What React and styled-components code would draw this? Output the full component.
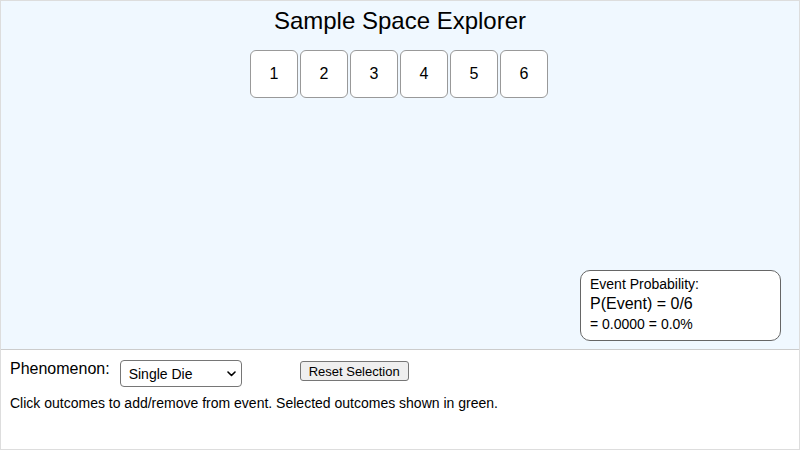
import React, { useState } from "react";
import styled, { createGlobalStyle } from "styled-components";

const Global = createGlobalStyle`
  html, body { margin: 0; padding: 0; background: #fff; }
  body { font-family: "Liberation Sans", Arial, Helvetica, sans-serif; color: #000; }
  * { box-sizing: border-box; }
`;

const Frame = styled.div`
  width: 800px;
  height: 450px;
  border: 1px solid #ddd;
  display: flex;
  flex-direction: column;
`;

const Canvas = styled.div`
  position: relative;
  height: 349px;
  flex: none;
  background: #f0f8ff;
  border-bottom: 1px solid #ccc;
  display: flex;
  flex-direction: column;
  align-items: center;
`;

const Title = styled.h1`
  margin: 6px 0 0;
  font-size: 24px;
  font-weight: normal;
  line-height: 28px;
  text-align: center;
`;

const OutcomeRow = styled.div`
  margin-top: 15px;
  display: grid;
  grid-template-columns: repeat(6, 50px);
`;

const Outcome = styled.button`
  width: 48px;
  height: 48px;
  padding: 0;
  border: 1px solid #999;
  border-radius: 6px;
  background: ${(p) => (p.$selected ? "#9be59b" : "#fff")};
  font-family: inherit;
  font-size: 16px;
  color: #000;
  cursor: pointer;
  display: flex;
  align-items: center;
  justify-content: center;
`;

const ProbBox = styled.div`
  position: absolute;
  left: 579px;
  top: 269px;
  width: 201px;
  height: 71px;
  background: #fff;
  border: 1px solid #666;
  border-radius: 10px;
  padding: 4px 9px 0;
`;

const ProbLine = styled.div`
  font-size: ${(p) => p.$size}px;
  line-height: 18px;
  margin-top: ${(p) => p.$gap || 0}px;
  white-space: nowrap;
`;

const Panel = styled.div`
  flex: 1;
  padding: 10px 9px;
`;

const ControlRow = styled.div`
  display: flex;
  align-items: flex-start;
`;

const Label = styled.label`
  font-size: 16px;
  line-height: 18px;
  margin-right: 10px;
`;

const SelectWrap = styled.div`
  position: relative;
  width: 122px;
  height: 27px;
  margin-right: 58px;
`;

const Select = styled.select`
  appearance: none;
  -webkit-appearance: none;
  width: 100%;
  height: 100%;
  border: 1px solid #767676;
  border-radius: 4px;
  background: #fff;
  padding: 0 0 0 8px;
  font-family: inherit;
  font-size: 14px;
  color: #000;
  outline: none;
`;

const Chevron = styled.svg`
  position: absolute;
  right: 6px;
  top: 11px;
  pointer-events: none;
`;

const ResetButton = styled.button`
  margin-top: 1px;
  height: 20px;
  padding: 0 8px;
  border: 1px solid #767676;
  border-radius: 3px;
  background: #efefef;
  font-family: inherit;
  font-size: 13px;
  color: #000;
  cursor: pointer;
`;

const Hint = styled.p`
  margin: 8px 0 0;
  font-size: 14px;
  line-height: 16px;
`;

export default function App() {
  const [selected, setSelected] = useState([]);
  const outcomes = [1, 2, 3, 4, 5, 6];
  const toggle = (o) =>
    setSelected((s) => (s.includes(o) ? s.filter((x) => x !== o) : [...s, o]));
  const p = selected.length / outcomes.length;

  return (
    <>
      <Global />
      <Frame>
        <Canvas>
          <Title>Sample Space Explorer</Title>
          <OutcomeRow>
            {outcomes.map((o) => (
              <Outcome key={o} $selected={selected.includes(o)} onClick={() => toggle(o)}>
                {o}
              </Outcome>
            ))}
          </OutcomeRow>
          <ProbBox>
            <ProbLine $size={14}>Event Probability:</ProbLine>
            <ProbLine $size={16} $gap={2}>
              P(Event) = {selected.length}/{outcomes.length}
            </ProbLine>
            <ProbLine $size={14} $gap={2}>
              = {p.toFixed(4)} = {(p * 100).toFixed(1)}%
            </ProbLine>
          </ProbBox>
        </Canvas>
        <Panel>
          <ControlRow>
            <Label htmlFor="phen">Phenomenon:</Label>
            <SelectWrap>
              <Select id="phen" defaultValue="die">
                <option value="die">Single Die</option>
                <option value="coin">Single Coin</option>
                <option value="two">Two Dice</option>
              </Select>
              <Chevron width="9" height="6" viewBox="0 0 9 6">
                <path d="M1 1 L4.5 4.5 L8 1" fill="none" stroke="#000" strokeWidth="1.6" strokeLinecap="round" strokeLinejoin="round" />
              </Chevron>
            </SelectWrap>
            <ResetButton onClick={() => setSelected([])}>Reset Selection</ResetButton>
          </ControlRow>
          <Hint>Click outcomes to add/remove from event. Selected outcomes shown in green.</Hint>
        </Panel>
      </Frame>
    </>
  );
}
